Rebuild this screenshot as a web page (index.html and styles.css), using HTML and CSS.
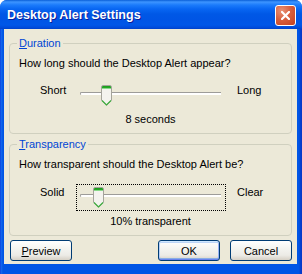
FILE: index.html
```html
<!DOCTYPE html>
<html lang="en">
<head>
  <meta charset="UTF-8" />
  <title>Desktop Alert Settings</title>
  <link rel="stylesheet" href="styles.css">
</head>
<body>
  <div class="window">
    <div class="titlebar">
      <span class="title">Desktop Alert Settings</span>
      <button class="close" aria-label="Close">
        <svg width="9" height="9" viewBox="0 0 9 9">
          <path d="M1 1 L8 8 M8 1 L1 8" stroke="#fff" stroke-width="2.2" stroke-linecap="square"/>
        </svg>
      </button>
    </div>

    <div class="frame">
      <div class="client">
        <fieldset class="group">
          <legend><u>D</u>uration</legend>
          <p class="question">How long should the Desktop Alert appear?</p>
          <div class="slider-row">
            <span class="end-label">Short</span>
            <div class="slider">
              <div class="track"></div>
              <svg class="thumb" style="left: 24px" width="11" height="21" viewBox="0 0 11 21">
                <path d="M0.5 2 Q0.5 0.5 2 0.5 H9 Q10.5 0.5 10.5 2 V15.3 L5.5 20.3 L0.5 15.3 Z" fill="#f4f3ee" stroke="#a5a49b"/>
                <path d="M1 3 V1.8 Q1 1 2 1 H9 Q10 1 10 1.8 V3 Z" fill="#1ea01e"/>
                <path d="M1 3.4 H10" stroke="#7ed77e" stroke-width="1"/>
                <path d="M1 15.5 L5.5 20 L10 15.5" fill="none" stroke="#3fae3f" stroke-width="1.2"/>
              </svg>
            </div>
            <span class="end-label">Long</span>
          </div>
          <p class="value">8 seconds</p>
        </fieldset>

        <fieldset class="group second">
          <legend><u>T</u>ransparency</legend>
          <p class="question">How transparent should the Desktop Alert be?</p>
          <div class="slider-row">
            <span class="end-label">Solid</span>
            <div class="slider focused">
              <div class="track"></div>
              <svg class="thumb" style="left: 16px" width="11" height="21" viewBox="0 0 11 21">
                <path d="M0.5 2 Q0.5 0.5 2 0.5 H9 Q10.5 0.5 10.5 2 V15.3 L5.5 20.3 L0.5 15.3 Z" fill="#f4f3ee" stroke="#a5a49b"/>
                <path d="M1 3 V1.8 Q1 1 2 1 H9 Q10 1 10 1.8 V3 Z" fill="#1ea01e"/>
                <path d="M1 3.4 H10" stroke="#7ed77e" stroke-width="1"/>
                <path d="M1 15.5 L5.5 20 L10 15.5" fill="none" stroke="#3fae3f" stroke-width="1.2"/>
              </svg>
            </div>
            <span class="end-label">Clear</span>
          </div>
          <p class="value">10% transparent</p>
        </fieldset>

        <div class="buttons">
          <button class="btn"><u>P</u>review</button>
          <span class="spacer"></span>
          <button class="btn default">OK</button>
          <button class="btn">Cancel</button>
        </div>
      </div>
    </div>
  </div>
</body>
</html>
```

FILE: styles.css
```css
body {
  margin: 0;
  background-color: #ffffff;
  font-family: 'Liberation Sans', Arial, sans-serif;
  font-size: 11px;
  line-height: 13px;
  color: #000;
}

.window {
  width: 302px;
  height: 274px;
  display: flex;
  flex-direction: column;
  border-radius: 7px 7px 0 0;
  overflow: hidden;
  background-color: #0055e5;
}

.titlebar {
  height: 29px;
  flex: none;
  display: flex;
  align-items: flex-start;
  justify-content: space-between;
  padding: 0 6px 0 7px;
  background: linear-gradient(to bottom,
    #0a5fd8 0px, #3d95ff 2px, #1b7bfb 5px, #0866f2 9px,
    #0058e6 14px, #0055e5 20px, #0057e8 25px, #0049d8 28px, #0040c5 29px);
}

.title {
  margin-top: 8px;
  color: #fff;
  font-weight: bold;
  font-size: 12.5px;
  line-height: 14px;
  text-shadow: 1px 1px 0 #0a1e9c;
}

.close {
  margin-top: 5px;
  width: 21px;
  height: 21px;
  padding: 0;
  border: 1px solid #fff;
  border-radius: 3px;
  background: radial-gradient(circle at 30% 25%, #e89276 0%, #d8603f 45%, #c4401f 100%);
  display: flex;
  align-items: center;
  justify-content: center;
}

.frame {
  flex: 1;
  display: flex;
  padding: 0 5px 10px 4px;
  background: linear-gradient(to right, #0831d9 0, #166aee 1px, #0055e5 3px, #0055e5 calc(100% - 3px), #0638c8 calc(100% - 1px));
}

.client {
  flex: 1;
  background-color: #ece9d8;
  padding: 8px 5px 3px 5px;
  display: flex;
  flex-direction: column;
}

.group {
  margin: 0;
  padding: 0 0 7px 0;
  border: 1px solid #d0d0bf;
  border-radius: 4px;
  min-inline-size: 0;
}

.group.second {
  margin-top: 4px;
}

.group legend {
  margin-left: 7px;
  padding: 0 2px;
  color: #0046d5;
}

.question {
  margin: 7px 0 0 9px;
}

.slider-row {
  display: flex;
  align-items: flex-start;
  margin-top: 12px;
  padding-left: 30px;
}

.second .slider-row {
  margin-top: 13px;
}

.end-label {
  margin-top: 2px;
}

.end-label:first-child {
  width: 36px;
}

.slider {
  position: relative;
  width: 150px;
  height: 27px;
  box-sizing: border-box;
  border: 1px dotted transparent;
  margin-right: 11px;
}

.slider.focused {
  border-color: #000;
}

.track {
  margin: 9px 4px 0 3px;
  height: 2px;
  border-top: 1px solid #9d9c99;
  border-left: 1px solid #9d9c99;
  border-radius: 2px 0 0 2px;
  background-color: #fff;
}

.thumb {
  position: absolute;
  top: 2px;
  display: block;
}

.value {
  margin: 4px 0 0 0;
  text-align: center;
}

.buttons {
  display: flex;
  margin-top: 4px;
  padding-left: 1px;
}

.spacer {
  flex: 1;
}

.btn {
  width: 62px;
  height: 21px;
  padding: 0;
  border: 1px solid #003c74;
  border-radius: 3px;
  background: linear-gradient(to bottom, #ffffff 0%, #f4f4f0 40%, #ecebe6 75%, #d6d0c5 100%);
  font-family: 'Liberation Sans', Arial, sans-serif;
  font-size: 11px;
  color: #000;
}

.btn.default {
  margin-right: 10px;
  box-shadow: inset 0 1px 0 #cee7ff, inset 0 -1px 0 #6982ee, inset 1px 0 0 #b7d0f7, inset -1px 0 0 #98b2f4,
    inset 0 2px 0 #bcd4f6, inset 0 -2px 0 #89ade4;
}
```
